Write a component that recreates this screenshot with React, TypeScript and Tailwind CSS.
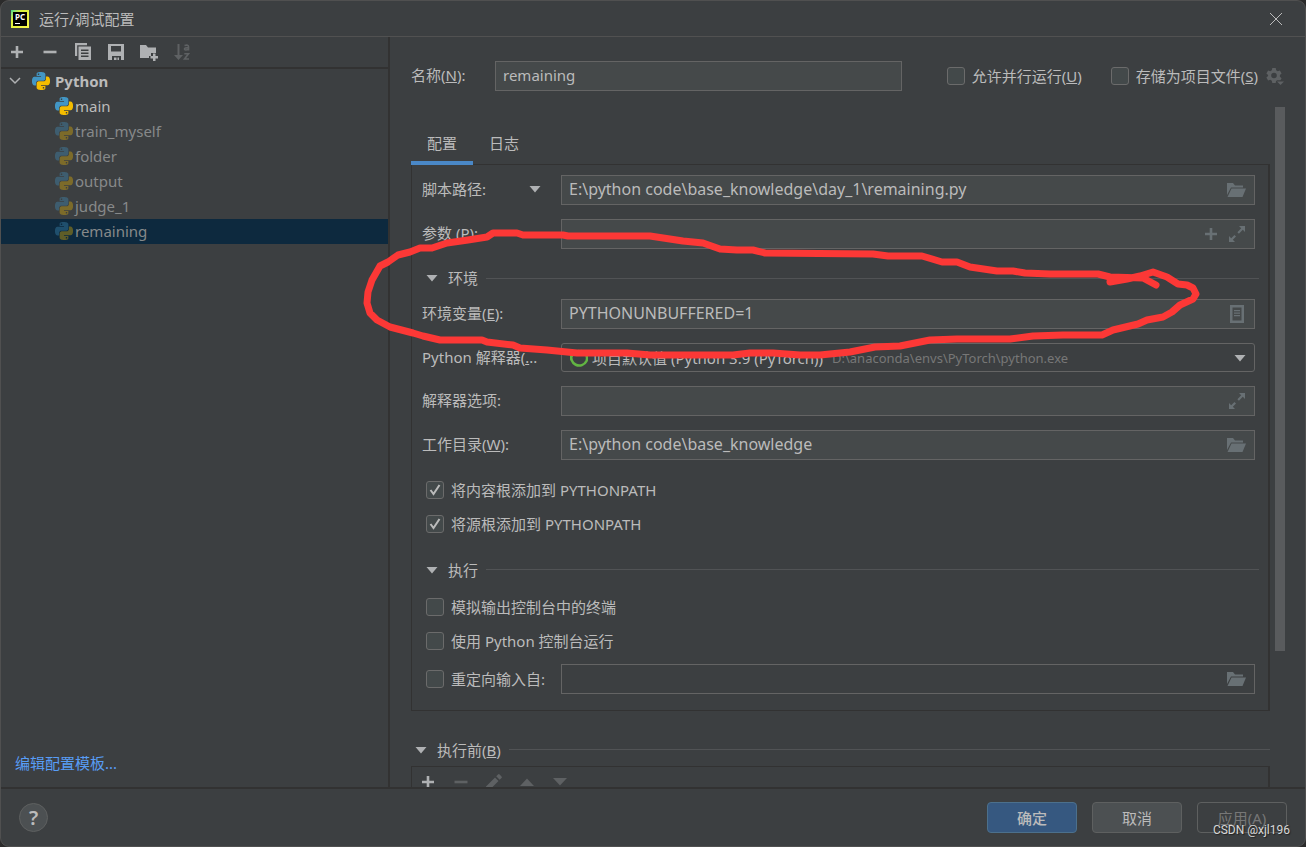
import { useState, type ReactNode } from "react";

const PYTHON_HALF =
	"M14.25.18l.9.2.73.26.59.3.45.32.34.34.25.34.16.33.1.3.04.26.02.2-.01.13V8.5l-.05.63-.13.55-.21.46-.26.38-.3.31-.33.25-.35.19-.35.14-.33.1-.3.07-.26.04-.21.02H8.77l-.69.05-.59.14-.5.22-.41.27-.33.32-.27.35-.2.36-.15.37-.1.35-.07.32-.04.27-.02.21v3.06H3.17l-.21-.03-.28-.07-.32-.12-.35-.18-.36-.26-.36-.36-.35-.46-.32-.59-.28-.73-.21-.88-.14-1.05-.05-1.23.06-1.22.16-1.04.24-.87.32-.71.36-.57.4-.44.42-.33.42-.24.4-.16.36-.1.32-.05.24-.01h.16l.06.01h8.16v-.83H6.18l-.01-2.75-.02-.37.05-.34.11-.31.17-.28.25-.26.31-.23.38-.2.44-.18.51-.15.58-.12.64-.1.71-.06.77-.04.84-.02 1.27.05zm-6.3 1.98l-.23.33-.08.41.08.41.23.34.33.22.41.09.41-.09.33-.22.23-.34.08-.41-.08-.41-.23-.33-.33-.22-.41-.09-.41.09z";

const MARKER =
	"M1110 282L1127 279L1140 276L1153 272L1167 277L1178 284L1187 285L1193 288L1196 294L1193 299L1180 305L1172 312L1163 317L1147 320L1138 324L1113 330L1102 335L1063 335L1033 336L1010 339L957 339L930 340L900 346L875 347L850 352L820 355L800 355L773 353L750 353L733 355L650 355L627 353L577 353L547 350L520 348L513 345L487 342L482 340L440 340L423 336L413 333L390 327L377 320L370 313L367 303L368 292L372 280L380 266L388 262L398 255L410 252L420 248L432 248L447 243L468 240L487 237L493 233L517 233L523 235L563 235L568 236L650 236L683 241L703 243L720 249L737 250L753 250L765 253L873 254L888 256L922 256L942 262L957 262L970 267L997 271L1013 271L1025 273L1050 274L1098 274L1110 277L1143 278L1156 285";

function PythonIcon({ dim = false }: { dim?: boolean }) {
	return (
		<svg viewBox="0 0 24 24" className={`size-[18px] shrink-0 ${dim ? "opacity-35" : ""}`}>
			<path d={PYTHON_HALF} fill="#4296c4" />
			<path d={PYTHON_HALF} fill="#f4bd00" transform="rotate(180 12 12)" />
		</svg>
	);
}

function Icon({ children }: { children: ReactNode }) {
	return (
		<svg viewBox="0 0 18 18" className="size-[18px] shrink-0" fill="currentColor">
			{children}
		</svg>
	);
}

const PlusIcon = () => (
	<Icon>
		<path d="M7.700 3h2.600v4.700H15v2.600h-4.700V15H7.700v-4.700H3V7.700h4.700z" />
	</Icon>
);

const MinusIcon = () => (
	<Icon>
		<path d="M2.500 7.700h13v2.600h-13z" />
	</Icon>
);

const CopyIcon = () => (
	<Icon>
		<path d="M1 0h12v2.200H3.200V13H1z" />
		<path
			fillRule="evenodd"
			d="M4.500 3.500H17V17H4.500zM7 6.500V8h7.500V6.500zM7 9.500V11h7.500V9.500zM7 12.500V14h7.500v-1.500z"
		/>
	</Icon>
);

const SaveIcon = () => (
	<Icon>
		<path fillRule="evenodd" d="M1 1h16v16h-3v-4H5v4H1zM4 3v5.500h10V3z" />
		<path d="M7 14.500h2.500V17H7zM10.500 14.500H12V17h-1.500z" />
	</Icon>
);

const NewFolderIcon = () => (
	<Icon>
		<path d="M0 2h6l2 2.500h8V10h-5v3H9v2H0z" />
		<path d="M13 10.500h2.500V13H18v2.500h-2.500V18H13v-2.500h-2.500V13H13z" />
	</Icon>
);

const SortIcon = () => (
	<Icon>
		<path d="M4.500 1h2v11H10l-4.500 5L1 12h3.500z" />
		<g fill="none" stroke="currentColor" strokeWidth="1.600">
			<path d="M11.500 2.600q4-1.400 4 1.200v3.700M15.500 4.600q-4.200 0-4 1.500t4 .4" />
			<path d="M11.300 10.800h4.200l-4 5.200h4.500" />
		</g>
	</Icon>
);

const PencilIcon = () => (
	<Icon>
		<path d="M1 13.500l9-9L13.500 8l-9 9H1zM11.200 3.300l1.800-1.800q.8-.8 1.600 0l1.900 1.900q.8.8 0 1.600l-1.800 1.800z" />
	</Icon>
);

const UpIcon = () => (
	<Icon>
		<path d="M2 13l7-7.500 7 7.500z" />
	</Icon>
);

const DownIcon = () => (
	<Icon>
		<path d="M2 5h14l-7 7.500z" />
	</Icon>
);

const FolderIcon = () => (
	<svg viewBox="0 0 20 18" className="h-[18px] w-5 shrink-0" fill="currentColor">
		<path d="M1 2h6l2 2.500h8V6.500H5L1 14z" />
		<path d="M5.500 7.500H20L16.500 16H1.500z" />
	</svg>
);

const ExpandIcon = () => (
	<Icon>
		<path d="M11 1h6v6l-2.200-2.200-3.900 3.900-1.500-1.500 3.800-3.900zM1 11l2.200 2.200 3.300-3.300L8 11.400l-3.200 3.400L7 17H1z" />
	</Icon>
);

const ListIcon = () => (
	<Icon>
		<path fillRule="evenodd" d="M2 0h14v18H2zM4.500 2.500v13h9v-13z" />
		<path d="M6 5h6v1.200H6zM6 7.500h6v1.200H6zM6 10h6v1.200H6z" />
	</Icon>
);

const GearIcon = () => (
	<Icon>
		<path
			fillRule="evenodd"
			d="M6.300 1h3.400l.5 2.300 1.500.9 2.200-.8 1.700 3-1.700 1.500v1.800l1.700 1.500-1.200 2H11l-1 1-.3 1.800H6.300l-.5-2.300-1.500-.9-2.200.8-1.700-3 1.700-1.500V7.900L.4 6.400l1.700-3 2.200.8 1.500-.9zM8 5.700a2.800 2.800 0 1 0 0 5.600 2.800 2.800 0 0 0 0-5.600z"
		/>
		<path d="M11 14.500h7L14.500 18z" />
	</Icon>
);

function Triangle() {
	return (
		<svg viewBox="0 0 12 8" className="h-2 w-3 shrink-0 fill-[#afb1b3]">
			<path d="M0.500 1h11L6 7.500z" />
		</svg>
	);
}

type Tool = { label: string; icon: ReactNode; disabled?: boolean };

function Toolbar({ tools }: { tools: Tool[] }) {
	return (
		<div className="-ml-px flex">
			{tools.map((tool) => (
				<button
					key={tool.label}
					type="button"
					aria-label={tool.label}
					disabled={tool.disabled}
					className="flex h-[30px] w-[33px] items-center justify-center text-[#afb1b3] disabled:text-[#5e6163]"
				>
					{tool.icon}
				</button>
			))}
		</div>
	);
}

function Check({
	id,
	children,
	defaultChecked = false,
}: {
	id: string;
	children: ReactNode;
	defaultChecked?: boolean;
}) {
	return (
		<div className="flex items-center gap-[7px]">
			<span className="relative flex size-[18px] shrink-0">
				<input
					id={id}
					type="checkbox"
					defaultChecked={defaultChecked}
					className="peer size-[18px] appearance-none rounded-[3px] border border-[#6b6b6b] bg-[#43494a]"
				/>
				<svg
					viewBox="0 0 18 18"
					className="pointer-events-none absolute inset-0 hidden fill-none stroke-[#bbbbbb] stroke-2 peer-checked:block"
				>
					<path d="M4.500 9l3 4L13.500 4" />
				</svg>
			</span>
			<label htmlFor={id}>{children}</label>
		</div>
	);
}

function Section({ title }: { title: ReactNode }) {
	return (
		<button type="button" className="flex w-full items-center text-left">
			<Triangle />
			<span className="ml-[10px] mr-2">{title}</span>
			<span className="h-px flex-1 bg-[#515355]" />
		</button>
	);
}

function Field({
	id,
	value = "",
	label,
	plain = false,
	children,
}: {
	id: string;
	value?: string;
	label?: string;
	plain?: boolean;
	children?: ReactNode;
}) {
	return (
		<div
			className={`flex h-[30px] min-w-0 flex-1 items-center gap-2 border border-[#646464] pl-[7px] pr-2 text-[#687074] ${
				plain ? "" : "bg-[#45494a]"
			}`}
		>
			<input
				id={id}
				type="text"
				aria-label={label}
				defaultValue={value}
				className="min-w-0 flex-1 pb-[2px] text-[#bbbbbb] outline-none"
			/>
			{children}
		</div>
	);
}

function Row({ id, label, children }: { id: string; label: ReactNode; children: ReactNode }) {
	return (
		<div className="flex items-center">
			<label htmlFor={id} className="w-[139px] shrink-0 pb-[2px]">
				{label}
			</label>
			{children}
		</div>
	);
}

const configs = ["main", "train_myself", "folder", "output", "judge_1", "remaining"];

function Sidebar() {
	const [selected, setSelected] = useState("remaining");

	return (
		<aside className="flex w-[389px] shrink-0 flex-col border-r-2 border-[#323232]">
			<div className="border-b-2 border-[#323232]">
				<Toolbar
					tools={[
						{ label: "添加", icon: <PlusIcon /> },
						{ label: "移除", icon: <MinusIcon /> },
						{ label: "复制", icon: <CopyIcon /> },
						{ label: "保存", icon: <SaveIcon /> },
						{ label: "新建文件夹", icon: <NewFolderIcon /> },
						{ label: "排序", icon: <SortIcon />, disabled: true },
					]}
				/>
			</div>
			<div className="flex h-[25px] items-center pb-[2px] pl-2 font-bold">
				<svg viewBox="0 0 12 8" className="mr-[11px] h-2 w-3 fill-none stroke-[#afb1b3] stroke-[1.5]">
					<path d="M1 1l5 5 5-5" />
				</svg>
				<PythonIcon />
				<span className="ml-[5px]">Python</span>
			</div>
			<ul>
				{configs.map((name) => (
					<li key={name}>
						<button
							type="button"
							onClick={() => setSelected(name)}
							className={`flex h-[25px] w-full items-center gap-[2px] pb-[2px] pl-[54px] ${
								selected === name ? "bg-[#0d293e]" : ""
							} ${name === "main" ? "" : "text-[#87898a]"}`}
						>
							<PythonIcon dim={name !== "main"} />
							{name}
						</button>
					</li>
				))}
			</ul>
			<a href="#templates" className="mt-auto pb-[14px] pl-[14px] text-[#589df6]">
				编辑配置模板...
			</a>
		</aside>
	);
}

function ConfigForm() {
	return (
		<div className="flex flex-col border border-r-2 border-[#323232] pb-4 pl-[10px] pr-[13px] pt-[10px] [&_input]:text-base">
			<div className="flex flex-col gap-[14px]">
				<Row
					id="script"
					label={
						<span className="flex items-center justify-between pr-5">
							脚本路径:
							<Triangle />
						</span>
					}
				>
					<Field id="script" value="E:\python code\base_knowledge\day_1\remaining.py">
						<FolderIcon />
					</Field>
				</Row>
				<Row id="params" label="参数 (P):">
					<Field id="params">
						<PlusIcon />
						<ExpandIcon />
					</Field>
				</Row>
			</div>
			<div className="-mr-1 flex h-[50px] items-center pl-1 pt-2">
				<Section title="环境" />
			</div>
			<div className="flex flex-col gap-[14px]">
				<Row
					id="env"
					label={
						<>
							环境变量(<u>E</u>):
						</>
					}
				>
					<Field id="env" value="PYTHONUNBUFFERED=1">
						<ListIcon />
					</Field>
				</Row>
				<Row
					id="interpreter"
					label={
						<>
							Python 解释器(<u>.</u>..
						</>
					}
				>
					<div className="flex h-[29px] min-w-0 flex-1 items-center rounded-[3px] border border-[#646464] px-2">
						<svg viewBox="0 0 18 18" className="size-[18px] shrink-0 fill-none stroke-[#62b543]">
							<path d="M2 5a8 8 0 0 0 14.500 7M16.500 12a8 8 0 0 0-1-7.500" strokeWidth="2.500" />
							<path d="M1.500 11a8 8 0 0 1 14-6.500" strokeWidth="2" strokeDasharray="1.500 1.500" />
						</svg>
						<select id="interpreter" className="ml-1 appearance-none outline-none">
							<option>项目默认值 (Python 3.9 (PyTorch))</option>
						</select>
						<span className="ml-2 flex-1 truncate text-[13px] text-[#777777]">
							D:\anaconda\envs\PyTorch\python.exe
						</span>
						<Triangle />
					</div>
				</Row>
				<Row id="options" label="解释器选项:">
					<Field id="options">
						<ExpandIcon />
					</Field>
				</Row>
				<Row
					id="workdir"
					label={
						<>
							工作目录(<u>W</u>):
						</>
					}
				>
					<Field id="workdir" value="E:\python code\base_knowledge">
						<FolderIcon />
					</Field>
				</Row>
			</div>
			<div className="mt-5 flex flex-col gap-[14px] pl-1">
				<Check id="content-roots" defaultChecked>
					将内容根添加到 PYTHONPATH
				</Check>
				<Check id="source-roots" defaultChecked>
					将源根添加到 PYTHONPATH
				</Check>
			</div>
			<div className="-mr-1 flex h-[63px] items-center pl-1 pt-2">
				<Section title="执行" />
			</div>
			<div className="flex flex-col gap-[14px] pl-1">
				<Check id="terminal">模拟输出控制台中的终端</Check>
				<Check id="console">使用 Python 控制台运行</Check>
			</div>
			<div className="mt-[13px] flex items-center pl-1">
				<div className="w-[135px] shrink-0">
					<Check id="redirect">重定向输入自:</Check>
				</div>
				<Field id="redirect-path" label="重定向输入文件" plain>
					<FolderIcon />
				</Field>
			</div>
		</div>
	);
}

const tabs = ["配置", "日志"];

function Editor() {
	const [activeTab, setActiveTab] = useState("配置");

	return (
		<main className="flex min-w-0 flex-1 flex-col pl-[21px] pt-6">
			<div className="flex items-center pr-[21px]">
				<label htmlFor="name" className="w-[84px] shrink-0 pb-[2px]">
					名称(<u>N</u>):
				</label>
				<Field id="name" value="remaining" />
				<div className="ml-[45px] mr-[29px] shrink-0">
					<Check id="parallel">
						允许并行运行(<u>U</u>)
					</Check>
				</div>
				<div className="mr-2 shrink-0">
					<Check id="store">
						存储为项目文件(<u>S</u>)
					</Check>
				</div>
				<button type="button" aria-label="存储选项" className="text-[#5e6163]">
					<GearIcon />
				</button>
			</div>

			<div className="mt-4 flex min-h-0 flex-1 gap-[5px] pr-5">
				<div className="min-w-0 flex-1 overflow-hidden">
					<div className="relative -mb-px mt-5 flex">
						{tabs.map((tab) => (
							<button
								key={tab}
								type="button"
								onClick={() => setActiveTab(tab)}
								className={`h-[38px] border-b-4 px-4 pb-[2px] ${
									activeTab === tab ? "border-[#4a88c7]" : "border-transparent"
								}`}
							>
								{tab}
							</button>
						))}
					</div>
					<ConfigForm />
					<div className="flex h-[55px] items-center pl-1 pt-[22px]">
						<Section
							title={
								<>
									执行前(<u>B</u>)
								</>
							}
						/>
					</div>
					<div className="h-24 border border-r-2 border-[#323232]">
						<Toolbar
							tools={[
								{ label: "添加任务", icon: <PlusIcon /> },
								{ label: "移除任务", icon: <MinusIcon />, disabled: true },
								{ label: "编辑任务", icon: <PencilIcon />, disabled: true },
								{ label: "上移", icon: <UpIcon />, disabled: true },
								{ label: "下移", icon: <DownIcon />, disabled: true },
							]}
						/>
					</div>
				</div>
				<div className="w-[10px] shrink-0">
					<div className="h-4/5 bg-[#595b5d]" />
				</div>
			</div>
		</main>
	);
}

export default function App() {
	return (
		<div className="relative h-screen overflow-hidden bg-[#2b2b2b] font-['Noto_Sans','Noto_Sans_CJK_SC',sans-serif] text-[15px] leading-5 text-[#bbbbbb]">
			<div className="flex h-full flex-col rounded-[9px] border border-[#505050] bg-[#3c3f41]">
				<header className="flex h-9 shrink-0 items-center border-b border-[#515151] pl-[10px] pr-[22px]">
					<span className="flex size-[18px] bg-linear-to-br from-[#21d789] via-[#d8f03a] via-30% to-[#fcf84a] p-[2px]">
						<span className="flex flex-1 flex-col items-start gap-[2px] bg-black pl-[2px] pt-px">
							<span className="text-[8px] font-bold leading-[8px] text-white">PC</span>
							<span className="h-px w-[5px] bg-white" />
						</span>
					</span>
					<h1 className="ml-[10px] flex-1">运行/调试配置</h1>
					<button type="button" aria-label="关闭">
						<svg viewBox="0 0 14 14" className="size-[14px] stroke-[#bbbbbb]">
							<path d="M1 1l12 12M13 1L1 13" />
						</svg>
					</button>
				</header>

				<div className="flex min-h-0 flex-1">
					<Sidebar />
					<Editor />
				</div>

				<footer className="flex h-[59px] shrink-0 items-center gap-[15px] border-t-2 border-[#323232] px-[18px]">
					<button
						type="button"
						aria-label="帮助"
						className="mr-auto size-[29px] rounded-full border border-[#5e6060] bg-[#4c5052] text-xl font-semibold leading-6"
					>
						?
					</button>
					<button
						type="button"
						className="h-[31px] w-[90px] rounded border border-[#4c708c] bg-[#365880] font-medium"
					>
						确定
					</button>
					<button
						type="button"
						className="h-[31px] w-[90px] rounded border border-[#5e6060] bg-[#4c5052]"
					>
						取消
					</button>
					<button
						type="button"
						disabled
						className="h-[31px] w-[90px] rounded border border-[#5e6060] text-[#777777]"
					>
						应用(A)
					</button>
				</footer>
			</div>

			{/* red marker loop around the environment settings */}
			<svg
				viewBox="360 225 845 140"
				className="pointer-events-none absolute left-[360px] top-[225px] h-[140px] w-[845px] fill-none stroke-[#fc3836] stroke-[7]"
				strokeLinecap="round"
				strokeLinejoin="round"
			>
				<path d={MARKER} />
			</svg>

			<span className="pointer-events-none absolute bottom-2 right-4 font-[Roboto,sans-serif] text-xs leading-[18px] text-[#d8d8d8] [text-shadow:1px_1px_1px_#222]">
				CSDN @xjl196
			</span>
		</div>
	);
}
